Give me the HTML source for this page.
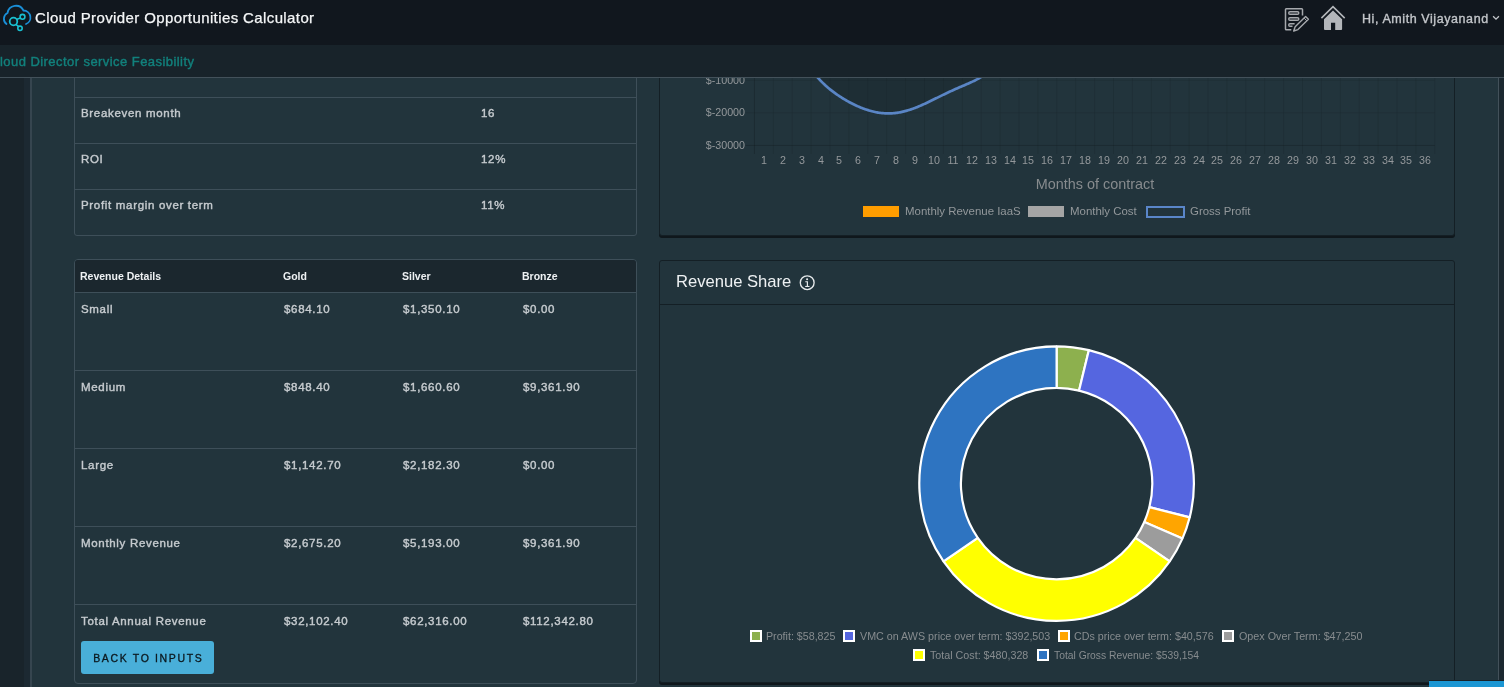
<!DOCTYPE html>
<html><head><meta charset="utf-8">
<style>
*{box-sizing:border-box;margin:0;padding:0}
html,body{width:1504px;height:687px;overflow:hidden;background:#22343c;font-family:"Liberation Sans",sans-serif}
.abs{position:absolute}
.title,.user,.subtitle,.cell,.th,.ax,.lg,.lg2,.rs,.btn{will-change:transform}
#hdr{z-index:5;left:0;top:0;width:1504px;height:45px;background:#11171e}
#sub{z-index:5;left:0;top:45px;width:1504px;height:32px;background:#18232a}
#subline{z-index:5;left:0;top:77px;width:1504px;height:1px;background:#43515a}
#lstrip1{left:0;top:78px;width:24px;height:609px;background:#19242b}
#lstrip2{left:24px;top:78px;width:6px;height:609px;background:#1c2932}
#lline{left:30px;top:78px;width:2px;height:609px;background:#36454f}
#rline{left:1498px;top:78px;width:1px;height:609px;background:#43515a}
#rstrip{left:1499px;top:78px;width:5px;height:609px;background:#1b2830}
.title{z-index:6;left:35px;top:9px;color:#f4f6f7;font-size:15px;letter-spacing:0.39px;-webkit-text-stroke:0.25px #f4f6f7;white-space:nowrap;line-height:18px}
.user{z-index:6;left:1362px;top:10.8px;color:#c3c6ca;font-size:12.5px;letter-spacing:0.58px;-webkit-text-stroke:0.35px #c3c6ca;white-space:nowrap;line-height:16px}
.subtitle{z-index:6;left:0px;top:53.6px;color:#12817c;font-size:13px;letter-spacing:0.44px;-webkit-text-stroke:0.4px #12817c;white-space:nowrap;line-height:16px}
.tbl{position:absolute;border:1px solid #3e4f59;border-radius:3px}
.hl{position:absolute;height:1px;background:#3e4f59}
.cell{position:absolute;color:#c6cbcf;font-size:11.5px;letter-spacing:0.68px;-webkit-text-stroke:0.4px #c6cbcf;white-space:nowrap;line-height:14px}
.th{position:absolute;color:#eef1f3;font-size:10.5px;font-weight:bold;white-space:nowrap;line-height:12px}
.card{position:absolute;background:#22343c;border:1px solid #141f25;border-radius:3px;box-shadow:0 2px 0 0 #0f171c}
.btn{left:81px;top:641px;width:133px;height:33px;background:#49afd9;border-radius:3px;color:#0b171d;-webkit-text-stroke:0.3px #0b171d;font-size:10.5px;letter-spacing:1.65px;text-indent:1.65px;text-align:center;line-height:34px;white-space:nowrap}
.ax{position:absolute;color:#94989b;font-size:10.7px;white-space:nowrap;line-height:13px}
.lg{position:absolute;color:#878c8f;font-size:10.7px;white-space:nowrap;line-height:13px}
.lg2{position:absolute;color:#93989b;font-size:11.45px;white-space:nowrap;line-height:13px}
.rs{left:676px;top:272px;color:#eef1f3;font-size:16.6px;white-space:nowrap;line-height:20px}
.mc{font-size:14.4px;line-height:17px;color:#878b8e}
</style></head><body>
<div id="hdr" class="abs"></div>
<div id="sub" class="abs"></div>
<div id="subline" class="abs"></div>
<div id="lstrip1" class="abs"></div>
<div id="lstrip2" class="abs"></div>
<div id="lline" class="abs"></div>
<div id="rline" class="abs"></div>
<div id="rstrip" class="abs"></div>

<!-- header -->
<svg class="abs" style="z-index:6;left:0;top:0" width="34" height="34" viewBox="0 0 34 34">
  <path d="M6.5 24 A6.5 6.5 0 0 1 7.5 13 A8.5 8.5 0 0 1 23.5 10.5 A7 7 0 0 1 26 24" fill="none" stroke="#1a8fd8" stroke-width="1.8" stroke-linecap="round"/>
  <circle cx="13.5" cy="21.5" r="3.8" fill="none" stroke="#19bfd0" stroke-width="1.8"/>
  <circle cx="22.5" cy="16.8" r="2.4" fill="none" stroke="#19bfd0" stroke-width="1.6"/>
  <circle cx="20" cy="28.3" r="2.2" fill="none" stroke="#19bfd0" stroke-width="1.6"/>
  <path d="M16.3 19.6 L20.4 17.9 M15.9 24.3 L18.6 26.6" stroke="#19bfd0" stroke-width="1.6"/>
</svg>
<div class="abs title">Cloud Provider Opportunities Calculator</div>

<svg class="abs" style="z-index:6;left:1280px;top:4px" width="32" height="30" viewBox="0 0 32 30">
  <path d="M11.3 25.85 H6.3 a0.8 0.8 0 0 1 -0.8 -0.8 V5.5 a0.8 0.8 0 0 1 0.8 -0.8 H21.7 a0.8 0.8 0 0 1 0.8 0.8 V11.6" fill="none" stroke="#a6a9ad" stroke-width="1.5"/>
  <rect x="8.7" y="7.7" width="10.1" height="2.5" rx="1.25" fill="none" stroke="#a6a9ad" stroke-width="1.4"/>
  <rect x="8.7" y="13.7" width="10.1" height="2.5" rx="1.25" fill="none" stroke="#a6a9ad" stroke-width="1.4"/>
  <path d="M14.6 19.7 H9.95 a1.25 1.25 0 0 0 0 2.5 H12.5" fill="none" stroke="#a6a9ad" stroke-width="1.4"/>
  <path d="M13.7 27 L15.15 22.77 L25.6 12.5 L28.4 15.3 L17.95 25.6 Z" fill="#11171e" stroke="#a6a9ad" stroke-width="1.4" stroke-linejoin="round"/>
  <path d="M24.1 14.1 L26.9 16.9" stroke="#a6a9ad" stroke-width="1"/>
</svg>
<svg class="abs" style="z-index:6;left:1317px;top:2px" width="32" height="32" viewBox="0 0 32 32">
  <path d="M4.4 16.1 L16 4.66 L27.7 16.1" fill="none" stroke="#b3b6ba" stroke-width="1.6"/>
  <path d="M7 17.3 L16 8.5 L25.1 17.3 V27 a1 1 0 0 1 -1 1 H18.2 V20.7 H14 V28 H8 a1 1 0 0 1 -1 -1 Z" fill="#b3b6ba"/>
</svg>
<div class="abs user">Hi, Amith Vijayanand</div>
<svg class="abs" style="z-index:6;left:1492px;top:15px" width="9" height="7" viewBox="0 0 9 7"><path d="M1.1 1.3 L4 4.2 L6.9 1.3" fill="none" stroke="#c3c6ca" stroke-width="1.3"/></svg>

<div class="abs subtitle">loud Director service Feasibility</div>

<!-- tables -->
<div class="tbl" style="left:74px;top:60px;width:563px;height:176px"></div>
<div class="hl" style="left:75px;top:97px;width:561px"></div>
<div class="cell" style="left:80.5px;top:105.5px">Breakeven month</div>
<div class="cell" style="left:481px;top:105.5px">16</div>
<div class="hl" style="left:75px;top:143px;width:561px"></div>
<div class="cell" style="left:80.5px;top:151.5px">ROI</div>
<div class="cell" style="left:481px;top:151.5px">12%</div>
<div class="hl" style="left:75px;top:189px;width:561px"></div>
<div class="cell" style="left:80.5px;top:197.5px">Profit margin over term</div>
<div class="cell" style="left:481px;top:197.5px">11%</div>
<div class="tbl" style="left:74px;top:259px;width:563px;height:425px;border-radius:4px"></div>
<div class="abs" style="left:75px;top:260px;width:561px;height:32px;background:#1b272e;border-radius:3px 3px 0 0"></div>
<div class="hl" style="left:75px;top:292px;width:561px"></div>
<div class="th" style="left:80px;top:270px">Revenue Details</div>
<div class="th" style="left:283px;top:270px">Gold</div>
<div class="th" style="left:402px;top:270px">Silver</div>
<div class="th" style="left:522px;top:270px">Bronze</div>
<div class="cell" style="left:80.5px;top:302px">Small</div>
<div class="cell" style="left:284px;top:302px">$684.10</div>
<div class="cell" style="left:403px;top:302px">$1,350.10</div>
<div class="cell" style="left:523px;top:302px">$0.00</div>
<div class="hl" style="left:75px;top:370px;width:561px"></div>
<div class="cell" style="left:80.5px;top:380px">Medium</div>
<div class="cell" style="left:284px;top:380px">$848.40</div>
<div class="cell" style="left:403px;top:380px">$1,660.60</div>
<div class="cell" style="left:523px;top:380px">$9,361.90</div>
<div class="hl" style="left:75px;top:448px;width:561px"></div>
<div class="cell" style="left:80.5px;top:458px">Large</div>
<div class="cell" style="left:284px;top:458px">$1,142.70</div>
<div class="cell" style="left:403px;top:458px">$2,182.30</div>
<div class="cell" style="left:523px;top:458px">$0.00</div>
<div class="hl" style="left:75px;top:526px;width:561px"></div>
<div class="cell" style="left:80.5px;top:536px">Monthly Revenue</div>
<div class="cell" style="left:284px;top:536px">$2,675.20</div>
<div class="cell" style="left:403px;top:536px">$5,193.00</div>
<div class="cell" style="left:523px;top:536px">$9,361.90</div>
<div class="hl" style="left:75px;top:604px;width:561px"></div>
<div class="cell" style="left:80.5px;top:614px">Total Annual Revenue</div>
<div class="cell" style="left:284px;top:614px">$32,102.40</div>
<div class="cell" style="left:403px;top:614px">$62,316.00</div>
<div class="cell" style="left:523px;top:614px">$112,342.80</div>
<div class="abs btn">BACK TO INPUTS</div>
<!-- charts -->
<div class="card" style="left:659px;top:40px;width:796px;height:196px"></div>
<div class="card" style="left:659px;top:260px;width:796px;height:423px"></div>
<div class="abs" style="left:660px;top:304px;width:794px;height:1px;background:#141f25"></div>
<div class="abs rs">Revenue Share</div>
<svg class="abs" style="left:798px;top:274px" width="19" height="19" viewBox="0 0 19 19"><circle cx="9.2" cy="8.7" r="6.9" fill="none" stroke="#e6e9eb" stroke-width="1.35"/><circle cx="9.1" cy="5.3" r="1.05" fill="#e6e9eb"/><path d="M7.3 7.75 H9.4 V12.3" fill="none" stroke="#e6e9eb" stroke-width="1.2"/><path d="M7.2 12.45 H11.5" fill="none" stroke="#e6e9eb" stroke-width="1.1"/></svg>
<svg class="abs" style="left:0;top:0" width="1504" height="687" viewBox="0 0 1504 687">
<line x1="745.4" y1="145.40" x2="1434.80" y2="145.40" stroke="rgba(0,0,0,0.1)" stroke-width="0.9"/>
<line x1="745.4" y1="112.85" x2="1434.80" y2="112.85" stroke="rgba(0,0,0,0.1)" stroke-width="0.9"/>
<line x1="745.4" y1="80.30" x2="1434.80" y2="80.30" stroke="rgba(0,0,0,0.1)" stroke-width="0.9"/>
<line x1="745.4" y1="47.75" x2="1434.80" y2="47.75" stroke="rgba(0,0,0,0.1)" stroke-width="0.9"/>
<line x1="754.40" y1="40" x2="754.40" y2="154.00" stroke="rgba(0,0,0,0.1)" stroke-width="0.9"/>
<line x1="773.30" y1="40" x2="773.30" y2="154.00" stroke="rgba(0,0,0,0.1)" stroke-width="0.9"/>
<line x1="792.20" y1="40" x2="792.20" y2="154.00" stroke="rgba(0,0,0,0.1)" stroke-width="0.9"/>
<line x1="811.10" y1="40" x2="811.10" y2="154.00" stroke="rgba(0,0,0,0.1)" stroke-width="0.9"/>
<line x1="830.00" y1="40" x2="830.00" y2="154.00" stroke="rgba(0,0,0,0.1)" stroke-width="0.9"/>
<line x1="848.90" y1="40" x2="848.90" y2="154.00" stroke="rgba(0,0,0,0.1)" stroke-width="0.9"/>
<line x1="867.80" y1="40" x2="867.80" y2="154.00" stroke="rgba(0,0,0,0.1)" stroke-width="0.9"/>
<line x1="886.70" y1="40" x2="886.70" y2="154.00" stroke="rgba(0,0,0,0.1)" stroke-width="0.9"/>
<line x1="905.60" y1="40" x2="905.60" y2="154.00" stroke="rgba(0,0,0,0.1)" stroke-width="0.9"/>
<line x1="924.50" y1="40" x2="924.50" y2="154.00" stroke="rgba(0,0,0,0.1)" stroke-width="0.9"/>
<line x1="943.40" y1="40" x2="943.40" y2="154.00" stroke="rgba(0,0,0,0.1)" stroke-width="0.9"/>
<line x1="962.30" y1="40" x2="962.30" y2="154.00" stroke="rgba(0,0,0,0.1)" stroke-width="0.9"/>
<line x1="981.20" y1="40" x2="981.20" y2="154.00" stroke="rgba(0,0,0,0.1)" stroke-width="0.9"/>
<line x1="1000.10" y1="40" x2="1000.10" y2="154.00" stroke="rgba(0,0,0,0.1)" stroke-width="0.9"/>
<line x1="1019.00" y1="40" x2="1019.00" y2="154.00" stroke="rgba(0,0,0,0.1)" stroke-width="0.9"/>
<line x1="1037.90" y1="40" x2="1037.90" y2="154.00" stroke="rgba(0,0,0,0.1)" stroke-width="0.9"/>
<line x1="1056.80" y1="40" x2="1056.80" y2="154.00" stroke="rgba(0,0,0,0.1)" stroke-width="0.9"/>
<line x1="1075.70" y1="40" x2="1075.70" y2="154.00" stroke="rgba(0,0,0,0.1)" stroke-width="0.9"/>
<line x1="1094.60" y1="40" x2="1094.60" y2="154.00" stroke="rgba(0,0,0,0.1)" stroke-width="0.9"/>
<line x1="1113.50" y1="40" x2="1113.50" y2="154.00" stroke="rgba(0,0,0,0.1)" stroke-width="0.9"/>
<line x1="1132.40" y1="40" x2="1132.40" y2="154.00" stroke="rgba(0,0,0,0.1)" stroke-width="0.9"/>
<line x1="1151.30" y1="40" x2="1151.30" y2="154.00" stroke="rgba(0,0,0,0.1)" stroke-width="0.9"/>
<line x1="1170.20" y1="40" x2="1170.20" y2="154.00" stroke="rgba(0,0,0,0.1)" stroke-width="0.9"/>
<line x1="1189.10" y1="40" x2="1189.10" y2="154.00" stroke="rgba(0,0,0,0.1)" stroke-width="0.9"/>
<line x1="1208.00" y1="40" x2="1208.00" y2="154.00" stroke="rgba(0,0,0,0.1)" stroke-width="0.9"/>
<line x1="1226.90" y1="40" x2="1226.90" y2="154.00" stroke="rgba(0,0,0,0.1)" stroke-width="0.9"/>
<line x1="1245.80" y1="40" x2="1245.80" y2="154.00" stroke="rgba(0,0,0,0.1)" stroke-width="0.9"/>
<line x1="1264.70" y1="40" x2="1264.70" y2="154.00" stroke="rgba(0,0,0,0.1)" stroke-width="0.9"/>
<line x1="1283.60" y1="40" x2="1283.60" y2="154.00" stroke="rgba(0,0,0,0.1)" stroke-width="0.9"/>
<line x1="1302.50" y1="40" x2="1302.50" y2="154.00" stroke="rgba(0,0,0,0.1)" stroke-width="0.9"/>
<line x1="1321.40" y1="40" x2="1321.40" y2="154.00" stroke="rgba(0,0,0,0.1)" stroke-width="0.9"/>
<line x1="1340.30" y1="40" x2="1340.30" y2="154.00" stroke="rgba(0,0,0,0.1)" stroke-width="0.9"/>
<line x1="1359.20" y1="40" x2="1359.20" y2="154.00" stroke="rgba(0,0,0,0.1)" stroke-width="0.9"/>
<line x1="1378.10" y1="40" x2="1378.10" y2="154.00" stroke="rgba(0,0,0,0.1)" stroke-width="0.9"/>
<line x1="1397.00" y1="40" x2="1397.00" y2="154.00" stroke="rgba(0,0,0,0.1)" stroke-width="0.9"/>
<line x1="1415.90" y1="40" x2="1415.90" y2="154.00" stroke="rgba(0,0,0,0.1)" stroke-width="0.9"/>
<line x1="1434.80" y1="40" x2="1434.80" y2="154.00" stroke="rgba(0,0,0,0.1)" stroke-width="0.9"/>
<line x1="754.40" y1="40" x2="754.40" y2="154.00" stroke="rgba(0,0,0,0.12)" stroke-width="0.9"/>
<line x1="745.4" y1="145.40" x2="1434.80" y2="145.40" stroke="rgba(0,0,0,0.12)" stroke-width="0.9"/>
<path d="M806.00 68.00 L816.00 75.48 L817.00 76.68 L818.00 77.84 L819.00 78.96 L820.00 80.05 L821.00 81.11 L822.00 82.13 L823.00 83.12 L824.00 84.08 L825.00 85.02 L826.00 85.93 L827.00 86.81 L828.00 87.68 L829.00 88.52 L830.00 89.34 L831.00 90.14 L832.00 90.92 L833.00 91.68 L834.00 92.43 L835.00 93.16 L836.00 93.87 L837.00 94.57 L838.00 95.26 L839.00 95.93 L840.00 96.59 L841.00 97.23 L842.00 97.86 L843.00 98.48 L844.00 99.09 L845.00 99.68 L846.00 100.27 L847.00 100.84 L848.00 101.40 L849.00 101.95 L850.00 102.49 L851.00 103.01 L852.00 103.53 L853.00 104.03 L854.00 104.53 L855.00 105.01 L856.00 105.48 L857.00 105.94 L858.00 106.38 L859.00 106.82 L860.00 107.24 L861.00 107.65 L862.00 108.05 L863.00 108.43 L864.00 108.80 L865.00 109.16 L866.00 109.51 L867.00 109.84 L868.00 110.16 L869.00 110.47 L870.00 110.76 L871.00 111.04 L872.00 111.30 L873.00 111.55 L874.00 111.78 L875.00 112.00 L876.00 112.20 L877.00 112.39 L878.00 112.56 L879.00 112.72 L880.00 112.86 L881.00 112.99 L882.00 113.10 L883.00 113.19 L884.00 113.27 L885.00 113.33 L886.00 113.38 L887.00 113.40 L888.00 113.42 L889.00 113.41 L890.00 113.39 L891.00 113.35 L892.00 113.30 L893.00 113.23 L894.00 113.14 L895.00 113.04 L896.00 112.92 L897.00 112.79 L898.00 112.64 L899.00 112.48 L900.00 112.30 L901.00 112.10 L902.00 111.89 L903.00 111.66 L904.00 111.42 L905.00 111.17 L906.00 110.90 L907.00 110.62 L908.00 110.32 L909.00 110.02 L910.00 109.70 L911.00 109.36 L912.00 109.02 L913.00 108.66 L914.00 108.29 L915.00 107.92 L916.00 107.53 L917.00 107.13 L918.00 106.72 L919.00 106.30 L920.00 105.88 L921.00 105.45 L922.00 105.01 L923.00 104.56 L924.00 104.11 L925.00 103.65 L926.00 103.18 L927.00 102.71 L928.00 102.23 L929.00 101.76 L930.00 101.27 L931.00 100.79 L932.00 100.30 L933.00 99.81 L934.00 99.32 L935.00 98.82 L936.00 98.33 L937.00 97.84 L938.00 97.34 L939.00 96.85 L940.00 96.36 L941.00 95.87 L942.00 95.38 L943.00 94.89 L944.00 94.41 L945.00 93.93 L946.00 93.45 L947.00 92.97 L948.00 92.50 L949.00 92.03 L950.00 91.57 L951.00 91.10 L952.00 90.65 L953.00 90.19 L954.00 89.74 L955.00 89.29 L956.00 88.85 L957.00 88.41 L958.00 87.97 L959.00 87.54 L960.00 87.10 L961.00 86.67 L962.00 86.24 L963.00 85.81 L964.00 85.39 L965.00 84.96 L966.00 84.53 L967.00 84.09 L968.00 83.66 L969.00 83.22 L970.00 82.77 L971.00 82.32 L972.00 81.86 L973.00 81.39 L974.00 80.91 L975.00 80.42 L976.00 79.91 L977.00 79.39 L978.00 78.85 L979.00 78.29 L980.00 77.70 L981.00 77.10 L982.00 76.46 L983.00 75.80 L993.00 71.00 L993.00 47.75 L806.00 47.75 Z" fill="rgba(0,0,0,0.1)"/>
<path d="M806.00 68.00 L816.00 75.48 L817.00 76.68 L818.00 77.84 L819.00 78.96 L820.00 80.05 L821.00 81.11 L822.00 82.13 L823.00 83.12 L824.00 84.08 L825.00 85.02 L826.00 85.93 L827.00 86.81 L828.00 87.68 L829.00 88.52 L830.00 89.34 L831.00 90.14 L832.00 90.92 L833.00 91.68 L834.00 92.43 L835.00 93.16 L836.00 93.87 L837.00 94.57 L838.00 95.26 L839.00 95.93 L840.00 96.59 L841.00 97.23 L842.00 97.86 L843.00 98.48 L844.00 99.09 L845.00 99.68 L846.00 100.27 L847.00 100.84 L848.00 101.40 L849.00 101.95 L850.00 102.49 L851.00 103.01 L852.00 103.53 L853.00 104.03 L854.00 104.53 L855.00 105.01 L856.00 105.48 L857.00 105.94 L858.00 106.38 L859.00 106.82 L860.00 107.24 L861.00 107.65 L862.00 108.05 L863.00 108.43 L864.00 108.80 L865.00 109.16 L866.00 109.51 L867.00 109.84 L868.00 110.16 L869.00 110.47 L870.00 110.76 L871.00 111.04 L872.00 111.30 L873.00 111.55 L874.00 111.78 L875.00 112.00 L876.00 112.20 L877.00 112.39 L878.00 112.56 L879.00 112.72 L880.00 112.86 L881.00 112.99 L882.00 113.10 L883.00 113.19 L884.00 113.27 L885.00 113.33 L886.00 113.38 L887.00 113.40 L888.00 113.42 L889.00 113.41 L890.00 113.39 L891.00 113.35 L892.00 113.30 L893.00 113.23 L894.00 113.14 L895.00 113.04 L896.00 112.92 L897.00 112.79 L898.00 112.64 L899.00 112.48 L900.00 112.30 L901.00 112.10 L902.00 111.89 L903.00 111.66 L904.00 111.42 L905.00 111.17 L906.00 110.90 L907.00 110.62 L908.00 110.32 L909.00 110.02 L910.00 109.70 L911.00 109.36 L912.00 109.02 L913.00 108.66 L914.00 108.29 L915.00 107.92 L916.00 107.53 L917.00 107.13 L918.00 106.72 L919.00 106.30 L920.00 105.88 L921.00 105.45 L922.00 105.01 L923.00 104.56 L924.00 104.11 L925.00 103.65 L926.00 103.18 L927.00 102.71 L928.00 102.23 L929.00 101.76 L930.00 101.27 L931.00 100.79 L932.00 100.30 L933.00 99.81 L934.00 99.32 L935.00 98.82 L936.00 98.33 L937.00 97.84 L938.00 97.34 L939.00 96.85 L940.00 96.36 L941.00 95.87 L942.00 95.38 L943.00 94.89 L944.00 94.41 L945.00 93.93 L946.00 93.45 L947.00 92.97 L948.00 92.50 L949.00 92.03 L950.00 91.57 L951.00 91.10 L952.00 90.65 L953.00 90.19 L954.00 89.74 L955.00 89.29 L956.00 88.85 L957.00 88.41 L958.00 87.97 L959.00 87.54 L960.00 87.10 L961.00 86.67 L962.00 86.24 L963.00 85.81 L964.00 85.39 L965.00 84.96 L966.00 84.53 L967.00 84.09 L968.00 83.66 L969.00 83.22 L970.00 82.77 L971.00 82.32 L972.00 81.86 L973.00 81.39 L974.00 80.91 L975.00 80.42 L976.00 79.91 L977.00 79.39 L978.00 78.85 L979.00 78.29 L980.00 77.70 L981.00 77.10 L982.00 76.46 L983.00 75.80 L993.00 71.00" fill="none" stroke="#5a85c5" stroke-width="2.7"/>
</svg>
<div class="ax" style="left:645px;width:100px;text-align:right;top:73.8px">$-10000</div>
<div class="ax" style="left:645px;width:100px;text-align:right;top:106.4px">$-20000</div>
<div class="ax" style="left:645px;width:100px;text-align:right;top:138.9px">$-30000</div>
<div class="ax" style="left:748.85px;width:30px;text-align:center;top:154px">1</div>
<div class="ax" style="left:767.75px;width:30px;text-align:center;top:154px">2</div>
<div class="ax" style="left:786.65px;width:30px;text-align:center;top:154px">3</div>
<div class="ax" style="left:805.55px;width:30px;text-align:center;top:154px">4</div>
<div class="ax" style="left:824.45px;width:30px;text-align:center;top:154px">5</div>
<div class="ax" style="left:843.35px;width:30px;text-align:center;top:154px">6</div>
<div class="ax" style="left:862.25px;width:30px;text-align:center;top:154px">7</div>
<div class="ax" style="left:881.15px;width:30px;text-align:center;top:154px">8</div>
<div class="ax" style="left:900.05px;width:30px;text-align:center;top:154px">9</div>
<div class="ax" style="left:918.95px;width:30px;text-align:center;top:154px">10</div>
<div class="ax" style="left:937.85px;width:30px;text-align:center;top:154px">11</div>
<div class="ax" style="left:956.75px;width:30px;text-align:center;top:154px">12</div>
<div class="ax" style="left:975.65px;width:30px;text-align:center;top:154px">13</div>
<div class="ax" style="left:994.55px;width:30px;text-align:center;top:154px">14</div>
<div class="ax" style="left:1013.45px;width:30px;text-align:center;top:154px">15</div>
<div class="ax" style="left:1032.35px;width:30px;text-align:center;top:154px">16</div>
<div class="ax" style="left:1051.25px;width:30px;text-align:center;top:154px">17</div>
<div class="ax" style="left:1070.15px;width:30px;text-align:center;top:154px">18</div>
<div class="ax" style="left:1089.05px;width:30px;text-align:center;top:154px">19</div>
<div class="ax" style="left:1107.95px;width:30px;text-align:center;top:154px">20</div>
<div class="ax" style="left:1126.85px;width:30px;text-align:center;top:154px">21</div>
<div class="ax" style="left:1145.75px;width:30px;text-align:center;top:154px">22</div>
<div class="ax" style="left:1164.65px;width:30px;text-align:center;top:154px">23</div>
<div class="ax" style="left:1183.55px;width:30px;text-align:center;top:154px">24</div>
<div class="ax" style="left:1202.45px;width:30px;text-align:center;top:154px">25</div>
<div class="ax" style="left:1221.35px;width:30px;text-align:center;top:154px">26</div>
<div class="ax" style="left:1240.25px;width:30px;text-align:center;top:154px">27</div>
<div class="ax" style="left:1259.15px;width:30px;text-align:center;top:154px">28</div>
<div class="ax" style="left:1278.05px;width:30px;text-align:center;top:154px">29</div>
<div class="ax" style="left:1296.95px;width:30px;text-align:center;top:154px">30</div>
<div class="ax" style="left:1315.85px;width:30px;text-align:center;top:154px">31</div>
<div class="ax" style="left:1334.75px;width:30px;text-align:center;top:154px">32</div>
<div class="ax" style="left:1353.65px;width:30px;text-align:center;top:154px">33</div>
<div class="ax" style="left:1372.55px;width:30px;text-align:center;top:154px">34</div>
<div class="ax" style="left:1391.45px;width:30px;text-align:center;top:154px">35</div>
<div class="ax" style="left:1410.35px;width:30px;text-align:center;top:154px">36</div>
<div class="ax mc" style="left:994.6px;width:200px;text-align:center;top:175.5px">Months of contract</div>
<div class="abs" style="left:863px;top:206px;width:36px;height:11px;background:#ff9d00"></div>
<div class="lg2" style="left:905px;top:205px">Monthly Revenue IaaS</div>
<div class="abs" style="left:1028px;top:206px;width:36px;height:11px;background:#a5a5a5"></div>
<div class="lg2" style="left:1070px;top:205px">Monthly Cost</div>
<div class="abs" style="left:1146px;top:205.5px;width:39px;height:12px;border:2px solid #5a86c9"></div>
<div class="lg2" style="left:1189.5px;top:205px">Gross Profit</div>
<svg class="abs" style="left:0;top:0" width="1504" height="687" viewBox="0 0 1504 687">
<path d="M1056.60 346.30 A137.3 137.3 0 0 1 1088.85 350.14 L1079.08 390.58 A95.7 95.7 0 0 0 1056.60 387.90 Z" fill="#8db04e" stroke="#fff" stroke-width="2.2" stroke-linejoin="bevel"/>
<path d="M1088.85 350.14 A137.3 137.3 0 0 1 1189.68 517.38 L1149.36 507.15 A95.7 95.7 0 0 0 1079.08 390.58 Z" fill="#5566e0" stroke="#fff" stroke-width="2.2" stroke-linejoin="bevel"/>
<path d="M1189.68 517.38 A137.3 137.3 0 0 1 1182.40 538.60 L1144.29 521.94 A95.7 95.7 0 0 0 1149.36 507.15 Z" fill="#ffa500" stroke="#fff" stroke-width="2.2" stroke-linejoin="bevel"/>
<path d="M1182.40 538.60 A137.3 137.3 0 0 1 1169.71 561.42 L1135.44 537.85 A95.7 95.7 0 0 0 1144.29 521.94 Z" fill="#9c9c9c" stroke="#fff" stroke-width="2.2" stroke-linejoin="bevel"/>
<path d="M1169.71 561.42 A137.3 137.3 0 0 1 943.49 561.42 L977.76 537.85 A95.7 95.7 0 0 0 1135.44 537.85 Z" fill="#ffff00" stroke="#fff" stroke-width="2.2" stroke-linejoin="bevel"/>
<path d="M943.49 561.42 A137.3 137.3 0 0 1 1056.60 346.30 L1056.60 387.90 A95.7 95.7 0 0 0 977.76 537.85 Z" fill="#2e74c1" stroke="#fff" stroke-width="2.2" stroke-linejoin="bevel"/>
</svg>
<div class="abs" style="left:749.8px;top:630px;width:12px;height:12px;background:#8db04e;border:2px solid #fff"></div>
<div class="lg" style="left:765.7px;top:630.3px;font-size:10.68px">Profit: $58,825</div>
<div class="abs" style="left:843.1px;top:630px;width:12px;height:12px;background:#5566e0;border:2px solid #fff"></div>
<div class="lg" style="left:859.7px;top:630.3px;font-size:10.72px">VMC on AWS price over term: $392,503</div>
<div class="abs" style="left:1058.1px;top:630px;width:12px;height:12px;background:#ffa500;border:2px solid #fff"></div>
<div class="lg" style="left:1074.4px;top:630.3px;font-size:10.7px">CDs price over term: $40,576</div>
<div class="abs" style="left:1222.4px;top:630px;width:12px;height:12px;background:#9c9c9c;border:2px solid #fff"></div>
<div class="lg" style="left:1238.6px;top:630.3px;font-size:10.76px">Opex Over Term: $47,250</div>
<div class="abs" style="left:913.4px;top:648.5px;width:12px;height:12px;background:#ffff00;border:2px solid #fff"></div>
<div class="lg" style="left:930.3px;top:648.8px;font-size:10.72px">Total Cost: $480,328</div>
<div class="abs" style="left:1037px;top:648.5px;width:12px;height:12px;background:#2e74c1;border:2px solid #fff"></div>
<div class="lg" style="left:1053.6px;top:648.8px;font-size:10.32px">Total Gross Revenue: $539,154</div>
<!-- /charts -->
<div class="abs" style="z-index:7;left:1429px;top:680px;width:75px;height:7px;background:#1b96d3;border-top:1px solid #1a2228"></div>
</body></html>
